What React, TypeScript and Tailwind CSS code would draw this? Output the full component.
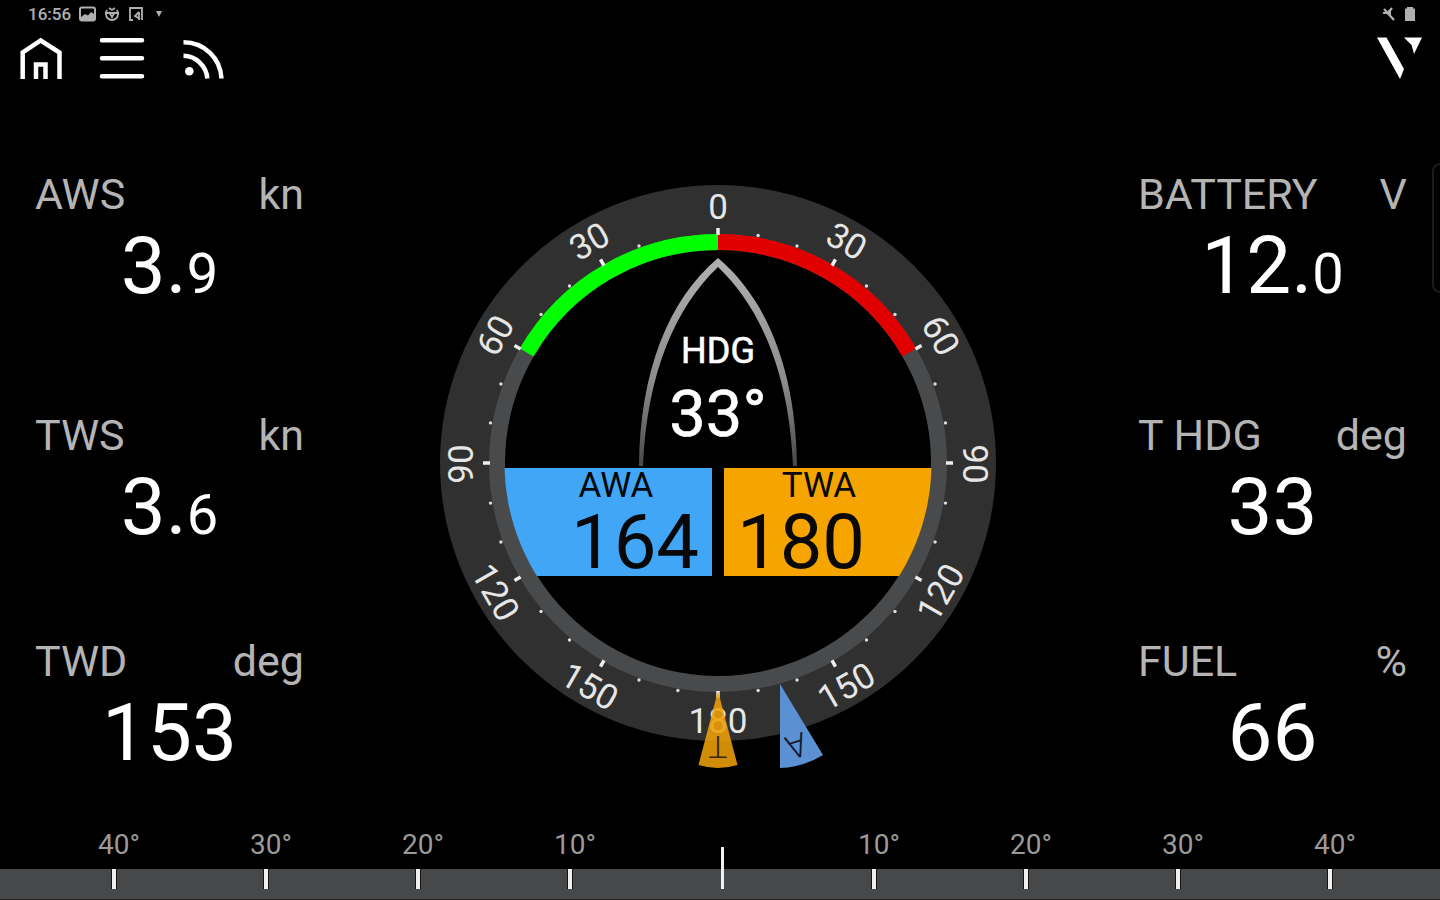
import React from "react";

type Metric = {
  label: string;
  unit: string;
  whole: string;
  fraction?: string;
};

const leftMetrics: Metric[] = [
  { label: "AWS", unit: "kn", whole: "3", fraction: "9" },
  { label: "TWS", unit: "kn", whole: "3", fraction: "6" },
  { label: "TWD", unit: "deg", whole: "153" },
];

const rightMetrics: Metric[] = [
  { label: "BATTERY", unit: "V", whole: "12", fraction: "0" },
  { label: "T HDG", unit: "deg", whole: "33" },
  { label: "FUEL", unit: "%", whole: "66" },
];

const scaleLabels = ["40°", "30°", "20°", "10°", "", "10°", "20°", "30°", "40°"];

const CX = 718;
const CY = 463;

function polar(angle: number, radius: number) {
  const rad = (angle * Math.PI) / 180;
  return { x: CX + radius * Math.sin(rad), y: CY - radius * Math.cos(rad) };
}

function arc(from: number, to: number, radius: number) {
  const a = polar(from, radius);
  const b = polar(to, radius);
  return `M${a.x} ${a.y}A${radius} ${radius} 0 0 1 ${b.x} ${b.y}`;
}

function MetricBlock({ metric }: { metric: Metric }) {
  return (
    <section className="flex flex-col">
      <div className="flex justify-between text-[43px] leading-[48px] text-[#b4b4b4]">
        <h2>{metric.label}</h2>
        <span>{metric.unit}</span>
      </div>
      <p className="text-center text-[80px] leading-[96px] text-white">
        {metric.whole}
        {metric.fraction && (
          <>
            .<span className="text-[56px] leading-none">{metric.fraction}</span>
          </>
        )}
      </p>
    </section>
  );
}

function MetricColumn({ metrics }: { metrics: Metric[] }) {
  return (
    <div className="flex w-[269px] flex-col pt-[70px]">
      <MetricBlock metric={metrics[0]} />
      <div className="h-[97px]" />
      <MetricBlock metric={metrics[1]} />
      <div className="h-[82px]" />
      <MetricBlock metric={metrics[2]} />
    </div>
  );
}

function StatusBar() {
  return (
    <div className="flex h-7 items-center justify-between pl-7 pr-6 text-[#b0b0b0]">
      <div className="flex items-center gap-2">
        <span className="text-[17px] font-medium leading-7">16:56</span>
        <svg className="h-4 w-[17px]" viewBox="0 0 17 16">
          <rect x="1" y="1.500" width="15" height="13" rx="2" fill="none" stroke="currentColor" strokeWidth="2" />
          <path d="M2 11l4-3 3 1.500L12 6l3 2v6H2z" fill="currentColor" />
        </svg>
        <svg className="h-4 w-4" viewBox="0 0 16 16" fill="none" stroke="currentColor" strokeWidth="1.800">
          <path d="M3 4a7 7 0 0 0-1 4 6 6 0 0 0 12 0 7 7 0 0 0-1-4M5 2l3 2 3-2M1 7h14M5 6l3 5 3-5" />
        </svg>
        <svg className="h-4 w-4" viewBox="0 0 16 16" fill="none" stroke="currentColor" strokeWidth="1.800">
          <path d="M5 14H2V2h12v12" />
          <path d="M11 6v8M11 6L7 10l5 3" />
        </svg>
        <svg className="ml-[3px] h-2 w-2" viewBox="0 0 8 8">
          <path d="M1 1h6L4 7z" fill="currentColor" />
        </svg>
      </div>
      <div className="flex items-center gap-2">
        <svg className="h-4 w-[15px]" viewBox="0 0 15 16" fill="none" stroke="currentColor">
          <path d="M2 6h4l4-4v9l-4-3H2z" fill="currentColor" stroke="none" />
          <path d="M3 3l10 11M11 2L6 8" strokeWidth="2.200" />
        </svg>
        <svg className="h-4 w-3" viewBox="0 0 12 16" fill="currentColor">
          <path d="M3 1h6v1.500h2V15H1V2.500h2z" />
        </svg>
      </div>
    </div>
  );
}

function Toolbar() {
  return (
    <div className="flex items-start justify-between pl-[18px] pr-4 pt-2">
      <nav className="flex gap-[34px]" aria-label="Main">
        <button type="button" aria-label="Home">
          <svg className="h-11 w-[46px]" viewBox="18 36 46 44" fill="none" stroke="#fff" strokeWidth="4.500">
            <path d="M22.700 79V52.500L40.700 40.500L59.500 52.500V79" />
            <path d="M36 79V64.500H45.500V79" />
          </svg>
        </button>
        <button type="button" aria-label="Menu">
          <svg className="h-11 w-12" viewBox="98 36 48 44" stroke="#fff" strokeWidth="4.500" strokeLinecap="round">
            <path d="M102 40.300H142M102 58.200H142M102 76.200H142" />
          </svg>
        </button>
        <button type="button" aria-label="Connection">
          <svg className="h-11 w-[46px]" viewBox="180 36 46 44" fill="none" stroke="#fff" strokeWidth="4.500">
            <circle cx="189.300" cy="71.300" r="4.300" fill="#fff" stroke="none" />
            <path d="M183.500 55.800C196 56 206.500 66 207.300 78.500" />
            <path d="M183.500 42.300C204 42.300 220.500 58 221.500 78.500" />
          </svg>
        </button>
      </nav>
      <svg className="h-11 w-[50px]" viewBox="1374 36 50 44" fill="#fff" role="img" aria-label="Logo">
        <path d="M1377 37.500H1386.500L1404 69L1400 79Z" />
        <path d="M1404 37.500H1422L1414 54L1411.500 45Z" />
      </svg>
    </div>
  );
}

const ringLabels = [0, 30, 60, 90, 120, 150, 180, -30, -60, -90, -120, -150];
const minorTicks = Array.from({ length: 36 }, (_, i) => i * 10).filter((a) => a % 30 !== 0 && a !== 350);

function WindGauge() {
  return (
    <svg className="mt-[84px] h-[590px] w-[562px] shrink-0" viewBox="440 184 562 590" role="img" aria-label="Wind angle">
      <defs>
        <clipPath id="dial">
          <circle cx={CX} cy={CY} r="213.500" />
        </clipPath>
        <linearGradient id="hull" x1="0" y1="0" x2="0" y2="1">
          <stop offset="0" stopColor="#b0b0b0" />
          <stop offset="0.6" stopColor="#8c8c8c" />
          <stop offset="1" stopColor="#484848" />
        </linearGradient>
      </defs>

      <circle cx={CX} cy={CY} r="253" fill="none" stroke="#303030" strokeWidth="50" />
      <circle cx={CX} cy={CY} r="221" fill="none" stroke="#484a4b" strokeWidth="16" />
      <path d={arc(-60, 0, 221)} fill="none" stroke="#00ff00" strokeWidth="16" />
      <path d={arc(0, 60, 221)} fill="none" stroke="#e00000" strokeWidth="16" />

      {ringLabels.map((a) => (
        <path key={a} d={`M${CX} 228V235`} transform={`rotate(${a} ${CX} ${CY})`} stroke="#eee" strokeWidth="3.500" />
      ))}
      {minorTicks.map((a) => {
        const p = polar(a, 231);
        return <circle key={a} cx={p.x} cy={p.y} r="1.700" fill="#ddd" />;
      })}

      <g fontSize="35" fill="#e6e6e6" textAnchor="middle">
        {ringLabels.map((a) => {
          const p = polar(a, 257);
          const turn = Math.abs(a) > 90 ? a - 180 : a;
          return (
            <text key={a} transform={`translate(${p.x} ${p.y + 1}) rotate(${turn})`} y="12">
              {Math.abs(a)}
            </text>
          );
        })}
      </g>

      <path
        d="M718 258C668 300 640 372 639 466H643C647 372 676 307 718 267C760 307 789 372 793 466H797C796 372 768 300 718 258Z"
        fill="url(#hull)"
      />

      <g clipPath="url(#dial)">
        <rect x="500" y="468" width="212" height="108" fill="#40a6f5" />
        <rect x="724" y="468" width="212" height="108" fill="#f6a500" />
      </g>

      <g textAnchor="middle">
        <g fill="#fff" stroke="#fff" strokeWidth="0.600">
          <text x="718" y="363" fontSize="36">HDG</text>
          <text x="718" y="436" fontSize="65">33°</text>
        </g>
        <g fill="#080808">
          <text x="616" y="497" fontSize="35">AWA</text>
          <text x="819" y="497" fontSize="35">TWA</text>
          <text x="635" y="568" fontSize="76">164</text>
          <text x="801" y="568" fontSize="76">180</text>
        </g>
      </g>

      <path d="M718 691L737.500 765Q718 771 698.500 765Z" fill="#ee9f08" fillOpacity="0.88" />
      <text transform="translate(718 736) rotate(180)" fontSize="32" fontWeight="300" textAnchor="middle" fill="#3a2a08">
        T
      </text>
      <path d="M780 684L823 755Q804 767 780 768Z" fill="#5b90d3" />
      <text transform="translate(793 735) rotate(162)" fontSize="33" fontWeight="300" textAnchor="middle" fill="#101828">
        A
      </text>
    </svg>
  );
}

function HeadingScale() {
  return (
    <footer className="mt-auto">
      <div className="grid grid-cols-9 pl-[43px] pr-[29px] text-center text-[28px] leading-8 text-[#9a9a9a]">
        {scaleLabels.map((label, i) => (
          <span key={i}>{label}</span>
        ))}
      </div>
      <div className="mt-2 h-[31px] border-b border-[#222] bg-[#474849]">
        <div className="grid grid-cols-9 justify-items-center pl-[38px] pr-[34px]">
          {scaleLabels.map((_, i) => (
            <span
              key={i}
              className={
                i === 4
                  ? "-mt-[22px] h-[42px] w-[3px] bg-[#f0f0f0]"
                  : "h-5 w-[6px] border-x border-[#151515] bg-[#f0f0f0]"
              }
            />
          ))}
        </div>
      </div>
    </footer>
  );
}

export default function App() {
  return (
    <div className="relative flex min-h-screen flex-col overflow-hidden bg-black font-[Roboto,sans-serif]">
      <header className="h-[100px]">
        <StatusBar />
        <Toolbar />
      </header>
      <main className="flex items-start justify-between pl-[35px] pr-[33px]">
        <MetricColumn metrics={leftMetrics} />
        <WindGauge />
        <MetricColumn metrics={rightMetrics} />
      </main>
      <HeadingScale />
      <div className="absolute -right-2 top-[163px] h-[130px] w-4 rounded-lg border-2 border-[#1c1c1c]" />
    </div>
  );
}
